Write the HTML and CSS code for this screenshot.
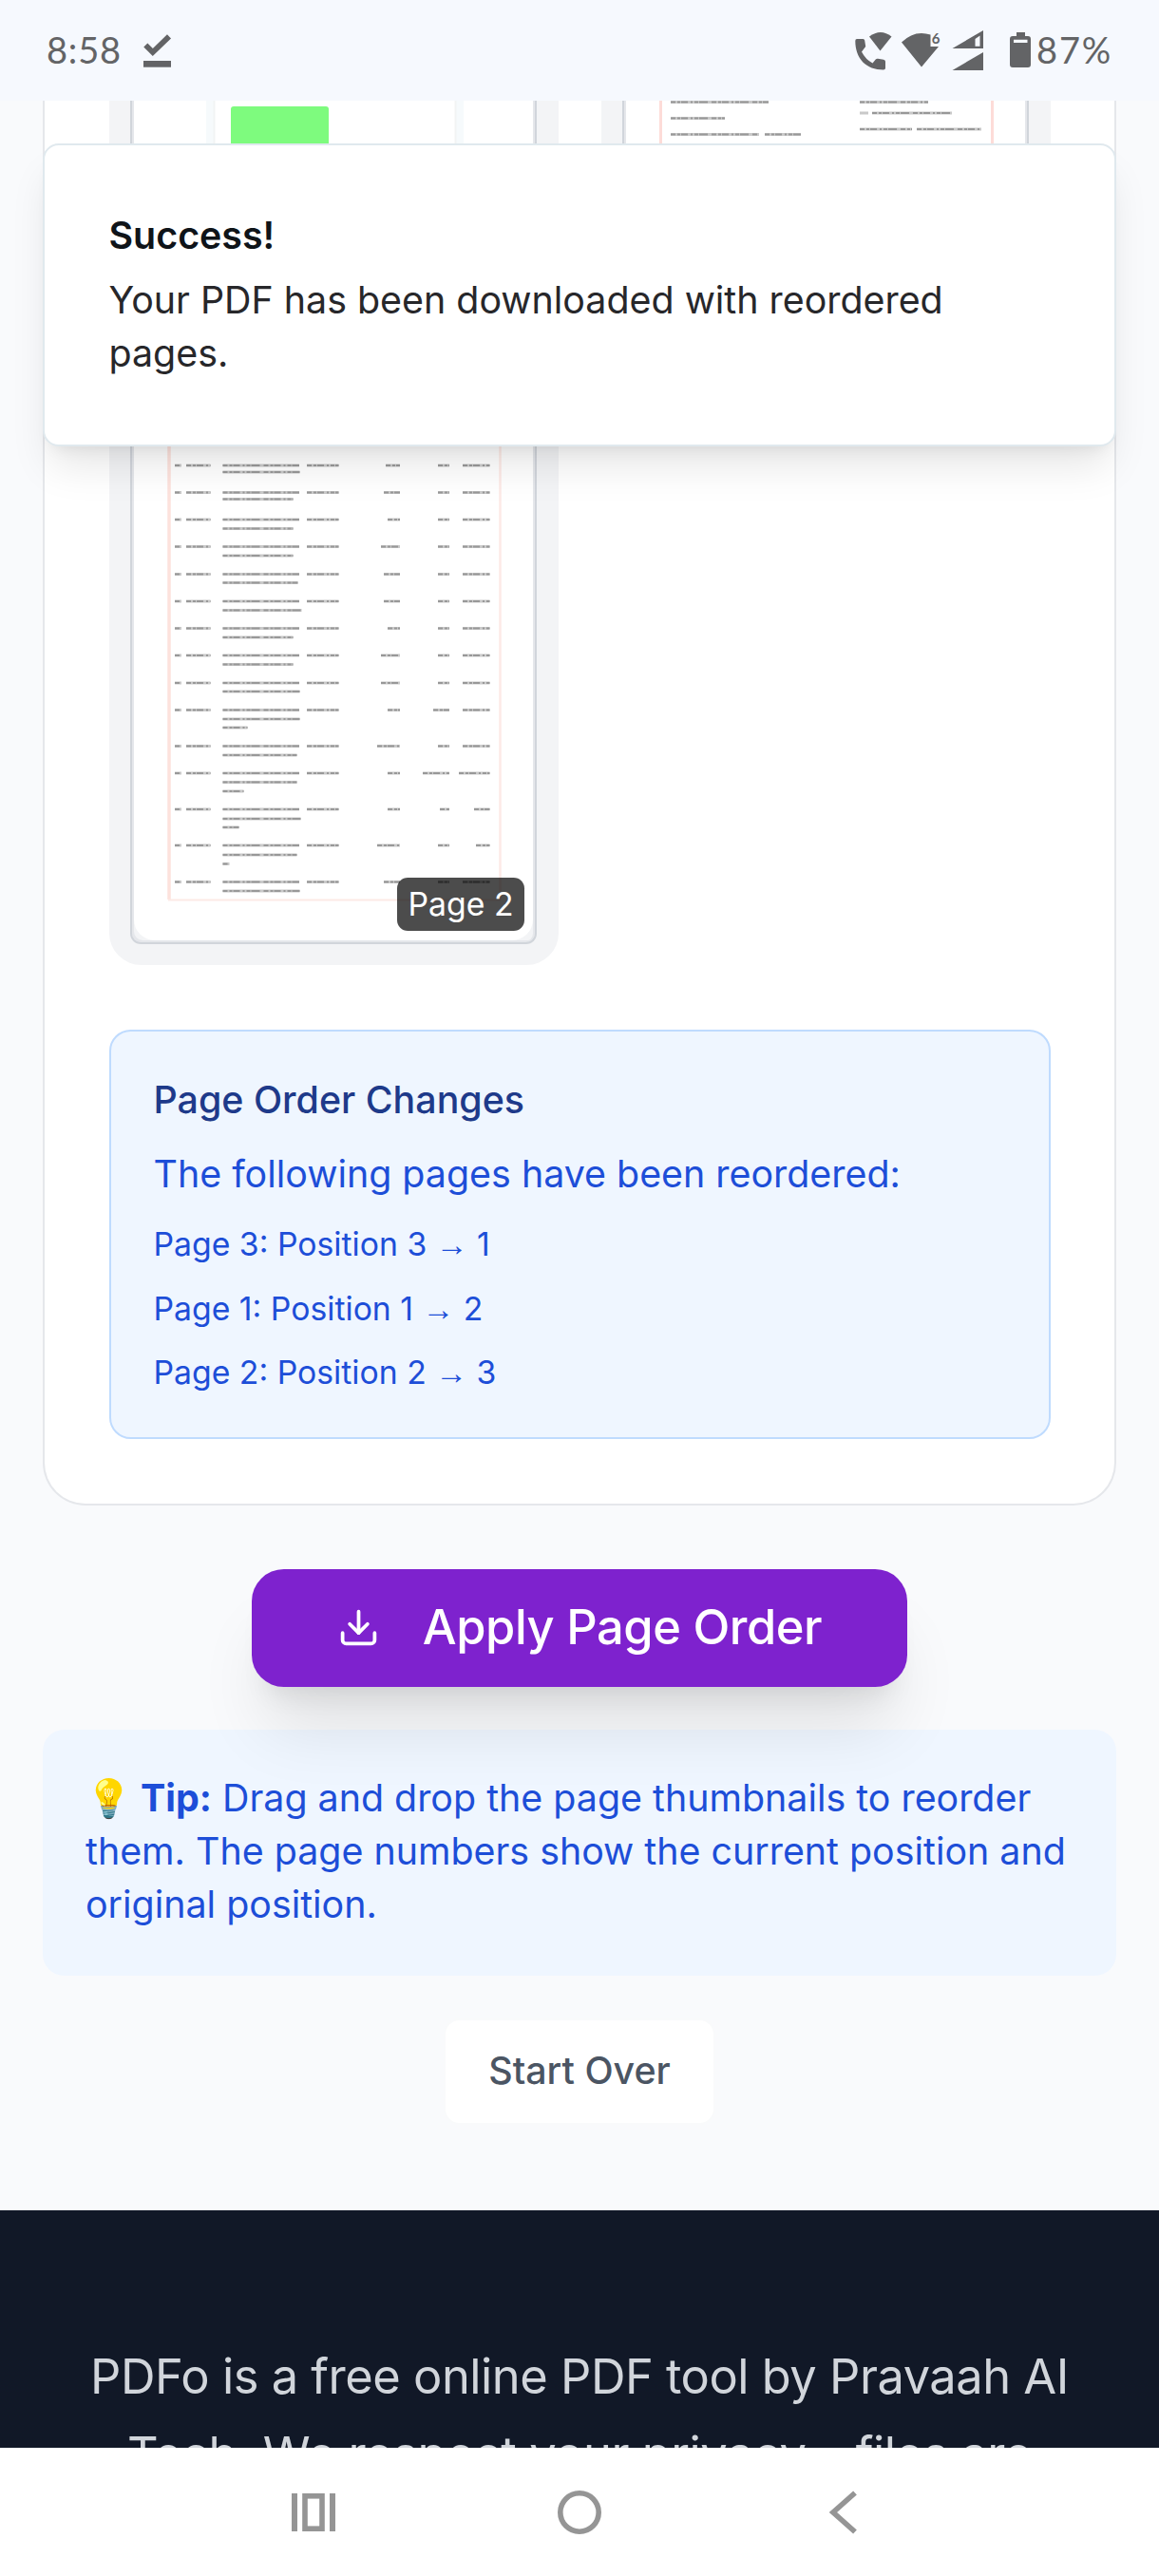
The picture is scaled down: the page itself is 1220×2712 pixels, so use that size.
FILE: index.html
```html
<!DOCTYPE html>
<html lang="en">
<head>
<meta charset="utf-8">
<title>PDFo – Reorder Pages</title>
<link rel="stylesheet" href="styles.css">
</head>
<body>
<div class="screen">
  <header class="statusbar">
    <div class="status-left">
      <span class="clock">8:58</span>
      <svg class="ic-done" width="30" height="42" viewBox="0 0 30 42"><path d="M2.300 16.500l7.500 7.500L27 7.300" fill="none" stroke="#636466" stroke-width="5.800"/><rect x="0" y="33" width="29" height="6.700" fill="#636466"/></svg>
    </div>
    <div class="status-right">
      <svg width="135" height="44" viewBox="0 0 135 44" fill="#636466">
        <path d="M2 9h6.500q1.500 0 1.700 1.500l1 6.500-4.200 5.500q4 8 11.500 12l3.500-4.200q1-.800 2-.600l6 1q2 .300 2 2v7q0 1.800-2 1.800C12 41.500.300 30 .300 11q0-2 1.700-2z"/>
        <path d="M26.500 21.500L15 6.500q12-9 23.500 0z"/>
        <path d="M70 38.500L49 12.500Q62.500-1 79.500 4.500V17H88z"/>
        <path d="M135 0V19H102.500zM131.500 5.500l-5 3.500v7.700h5z" fill-rule="evenodd"/>
        <path d="M135 23V42H102.500z"/>
        <text x="80.800" y="14" class="wifi-gen">6</text>
      </svg>
      <svg width="22" height="37" viewBox="0 0 22 37" class="ic-batt" fill="#636466"><path fill-rule="evenodd" d="M7 0h9v4h3q3 0 3 3v27q0 3-3 3H3q-3 0-3-3V7q0-3 3-3h4zM4 7.700v3.300h14.500V7.700z"/></svg>
      <span class="clock level">87%</span>
    </div>
  </header>

  <div class="viewport">
    <main class="page">
      <section class="card">
        <div class="grid">
          <div class="thumb thumb-cut"><div class="sheet">
            <svg width="420" height="78" viewBox="0 0 420 78"><path d="M80.500 0V78M342.500 0V78" stroke="#f6fafc" stroke-width="9"/><path d="M84.500 0V78M338.500 0V78" stroke="#f2f4f4" stroke-width="2"/><rect x="102" y="6" width="103" height="94" rx="3" fill="#7efb7e"/></svg>
          </div></div>
          <div class="thumb thumb-cut"><div class="sheet">
            <svg width="420" height="78" viewBox="0 0 420 78"><path d="M36.500 0V100M385.500 0V100" stroke="#fddcd8" stroke-width="3"/>
            <path class="ink" d="M47 1.500h103M47 18.500h57M47 35.500h93M146 35.500h38M47 52h80M246 1.500h72M246 13h9M259 13h84M246 30h55M306 30h68M246 46.500h98"/><path class="ink ink-2" d="M47 1.500h103M47 18.500h57M47 35.500h93M146 35.500h38M47 52h80M246 1.500h72M259 13h84M246 30h55M306 30h68M246 46.500h98"/></svg>
          </div></div>
          <div class="thumb thumb-full"><div class="sheet">
            <svg class="doc" width="420" height="548" viewBox="141 442 420 548">
              <path d="M178 442V947" stroke="#fde2dc" stroke-width="3.500"/><path d="M526.500 442V947" stroke="#fdeae6" stroke-width="2.500"/><path d="M177 947.500H527" stroke="#fdeae6" stroke-width="2"/>
              <g id="rows"></g>
            </svg>
            <span class="badge">Page 2</span>
          </div></div>
        </div>
        <div class="changes">
          <h4>Page Order Changes</h4>
          <p>The following pages have been reordered:</p>
          <ul>
            <li>Page 3: Position 3 <span class="arrow">→</span> 1</li>
            <li>Page 1: Position 1 <span class="arrow">→</span> 2</li>
            <li>Page 2: Position 2 <span class="arrow">→</span> 3</li>
          </ul>
        </div>
      </section>

      <button class="apply">
        <svg width="45" height="45" viewBox="0 0 24 24" fill="none" stroke="currentColor" stroke-width="2" stroke-linecap="round" stroke-linejoin="round"><path d="M21 15v4a2 2 0 0 1-2 2H5a2 2 0 0 1-2-2v-4"/><path d="M7 10l5 5 5-5"/><path d="M12 15V3"/></svg>
        <span>Apply Page Order</span>
      </button>

      <p class="tip"><span class="bulb">💡</span> <strong>Tip:</strong> Drag and drop the page thumbnails to reorder them. The page numbers show the current position and original position.</p>

      <button class="restart">Start Over</button>
    </main>
    <footer class="footer"><p>PDFo is a free online PDF tool by Pravaah AI<br>Tech. We respect your privacy – files are</p></footer>
  </div>

  <nav class="navbar">
    <svg width="46" height="40" viewBox="0 0 46 40" fill="none" stroke="#959595"><path d="M3 0V40M43 0V40" stroke-width="6"/><rect x="14" y="2.800" width="18" height="34.400" stroke-width="5.600"/></svg>
    <svg class="nav-home" width="46" height="46" viewBox="0 0 46 46" fill="none" stroke="#959595"><circle cx="23" cy="23" r="20.200" stroke-width="5.600"/></svg>
    <svg width="30" height="46" viewBox="0 0 30 46" fill="none" stroke="#959595"><path d="M27 2.500L4 23l23 20.500" stroke-width="5.600"/></svg>
  </nav>

  <div class="toast" role="status">
    <strong>Success!</strong>
    <p>Your PDF has been downloaded with reordered pages.</p>
  </div>
</div>
<script src="rows.js"></script>
</body>
</html>
```
FILE: styles.css
```css
/* 1rem = 16 CSS px on a 2.8125x phone display */
html { font-size: 45px; }
* { box-sizing: border-box; margin: 0; padding: 0; }
body { width: 1220px; font-family: Inter, "Liberation Sans", sans-serif; font-size: .875rem; line-height: 1.25rem; background: #f9fafc; }
.screen { position: relative; display: flex; flex-direction: column; height: 2712px; overflow: hidden; }

.statusbar { flex: none; height: 106px; padding: 0 49px; display: flex; justify-content: space-between; background: #f6f9fe; color: #636466; }
.status-left, .status-right { display: flex; align-items: flex-start; }
.clock { font-family: Lato, sans-serif; font-size: 38px; line-height: 46px; letter-spacing: .8px; margin-top: 29px; }
.level { letter-spacing: 1.800px; }
.ic-done { margin: 31px 0 0 23px; }
.status-right svg { margin-top: 32px; }
.status-right .ic-batt { margin: 34px 6px 0 28px; }
.wifi-gen { font: 700 15px Lato, sans-serif; }

.viewport { flex: none; height: 2471px; overflow: hidden; }
.page { display: flex; flex-direction: column; align-items: center; padding: 0 1rem 2rem; height: 2221px; }
.card { width: 1130px; height: 1478.500px; background: #fff; border: 2px solid #e5e7eb; border-top: 0; border-radius: 0 0 1rem 1rem; padding: 0 1.5rem 1.5rem; }
.grid { display: grid; grid-template-columns: 1fr 1fr; grid-template-rows: 100px 765px; gap: 1rem; }
.thumb { background: #f3f4f6; padding: 0 .5rem .5rem; border-radius: 0 0 .75rem .75rem; }
.sheet { position: relative; height: 100%; background: #fff; border: solid #d1d5db; border-width: 0 2px 2px; border-radius: 0 0 .25rem .25rem; box-shadow: inset 2px -2px #e5e7eb, inset -2px 0 #e5e7eb; overflow: hidden; display: flex; justify-content: center; align-items: flex-start; }
.thumb-full .sheet { background: #f3f4f6; padding-bottom: 2px; align-items: flex-end; }
.doc { background: #fff; border-radius: 0 0 22px 22px; }
.badge { position: absolute; right: 11px; bottom: 12px; padding: 0 .25rem; background: rgba(0,0,0,.7); color: #fff; font-size: .75rem; line-height: 56px; border-radius: .25rem; width: 134px; text-align: center; }
.ink { fill: none; stroke: #c9c9c9; stroke-width: 2.800; }
.ink-2 { stroke: #989898; stroke-width: 2; stroke-dasharray: 5 2 3 1 7 3 2 2 4 1 9 4; }

.changes { margin-top: 1.5rem; height: 431px; padding: 44px 1rem 1rem; border: 2px solid #bfdbfe; border-radius: .5rem; background: #eff6ff; color: #1d4ed8; display: flex; flex-direction: column; gap: .5rem; }
.changes h4 { font-size: .875rem; font-weight: 500; color: #1e3a8a; }
.changes ul { list-style: none; display: flex; flex-direction: column; gap: .5rem; font-size: .75rem; line-height: 1rem; }
.arrow { font-family: "Liberation Sans", sans-serif; line-height: 0; }

.apply { position: relative; flex: none; margin-top: 1.5rem; height: 2.75rem; padding: 0 2rem; display: flex; align-items: center; gap: 1rem; border: 0; border-radius: .75rem; background: #7e22ce; color: #fff; font: 500 1.125rem Inter, sans-serif; letter-spacing: -.46px; box-shadow: 0 1.25rem 1.5625rem -.3125rem rgba(0,0,0,.1), 0 .5rem .625rem -.375rem rgba(0,0,0,.1); }
.apply span { padding-bottom: 2px; }
.tip { width: 100%; margin-top: 1rem; padding: 44px 1rem 46px; background: #eff6ff; color: #1d4ed8; border-radius: .5rem; }
.bulb { margin-right: -2px; }
.restart { margin-top: 1rem; height: 2.5rem; padding: 0 1rem 2px; border: 2px solid #f9fafb; border-radius: .375rem; background: #fff; color: #4b5563; font: 500 .875rem Inter, sans-serif; }
.footer { height: 250px; padding-top: 134px; background: #111827; color: #d1d5db; text-align: center; font-size: 1.125rem; line-height: 1.828rem; letter-spacing: -.49px; }

.navbar { flex: none; height: 135px; background: #fff; display: flex; align-items: center; padding-left: 307px; }
.nav-home { margin: 0 240px 0 234px; }

/* Toast floats over the scrolled page */
.toast { position: absolute; left: 45px; top: 151px; width: 1130px; padding: 67px 1.5rem 68px; display: flex; flex-direction: column; gap: .25rem; background: #fff; border: 2px solid #e0e9ee; border-radius: .375rem; color: #27272a; box-shadow: 0 .625rem .9375rem -.1875rem rgba(0,0,0,.1), 0 .25rem .375rem -.25rem rgba(0,0,0,.1); }
.toast strong { font-weight: 600; color: #0f1419; }
```
FILE: rows.js
```js
// Statement rows of the page thumbnail: baseline, [continuation y, width]..., amount start, fee start, balance start
const rows = [
  [490, [[497, 81]], 406, 461, 487], [518.5, [[525.5, 74]], 404, 461, 487],
  [547, [[556.5, 74]], 408, 461, 487], [575.5, [[585, 74]], 401, 461, 487],
  [604.5, [[613.5, 79]], 404, 461, 487], [633, [[642.5, 83]], 404, 461, 487],
  [661.5, [[671, 74]], 408, 461, 487], [690, [[699.5, 74]], 401, 461, 487],
  [719, [[728, 81]], 401, 461, 487], [747.5, [[757, 81], [766, 26]], 408, 456, 487],
  [785.5, [[795, 78]], 397, 461, 487], [814, [[823.5, 78], [833, 22]], 408, 445, 483],
  [852, [[862, 82], [871, 17]], 408, 463, 499], [890, [[900, 78], [909.5, 7]], 397, 461, 501],
  [928.5, [[938, 81]], 404, 461, 487]
];
let d = '';
const seg = (x, y, end) => { d += `M${x} ${y}H${end}`; };
for (const [y, more, amount, fee, balance] of rows) {
  seg(184, y, 191); seg(196, y, 221.5); seg(234.5, y, 315); seg(323, y, 356.5);
  seg(amount, y, 421); seg(fee, y, 473); seg(balance, y, 515.5);
  for (const [my, w] of more) seg(234.5, my, 234.5 + w);
}
document.getElementById('rows').innerHTML = `<path class="ink" d="${d}"/><path class="ink ink-2" d="${d}"/>`;
```
